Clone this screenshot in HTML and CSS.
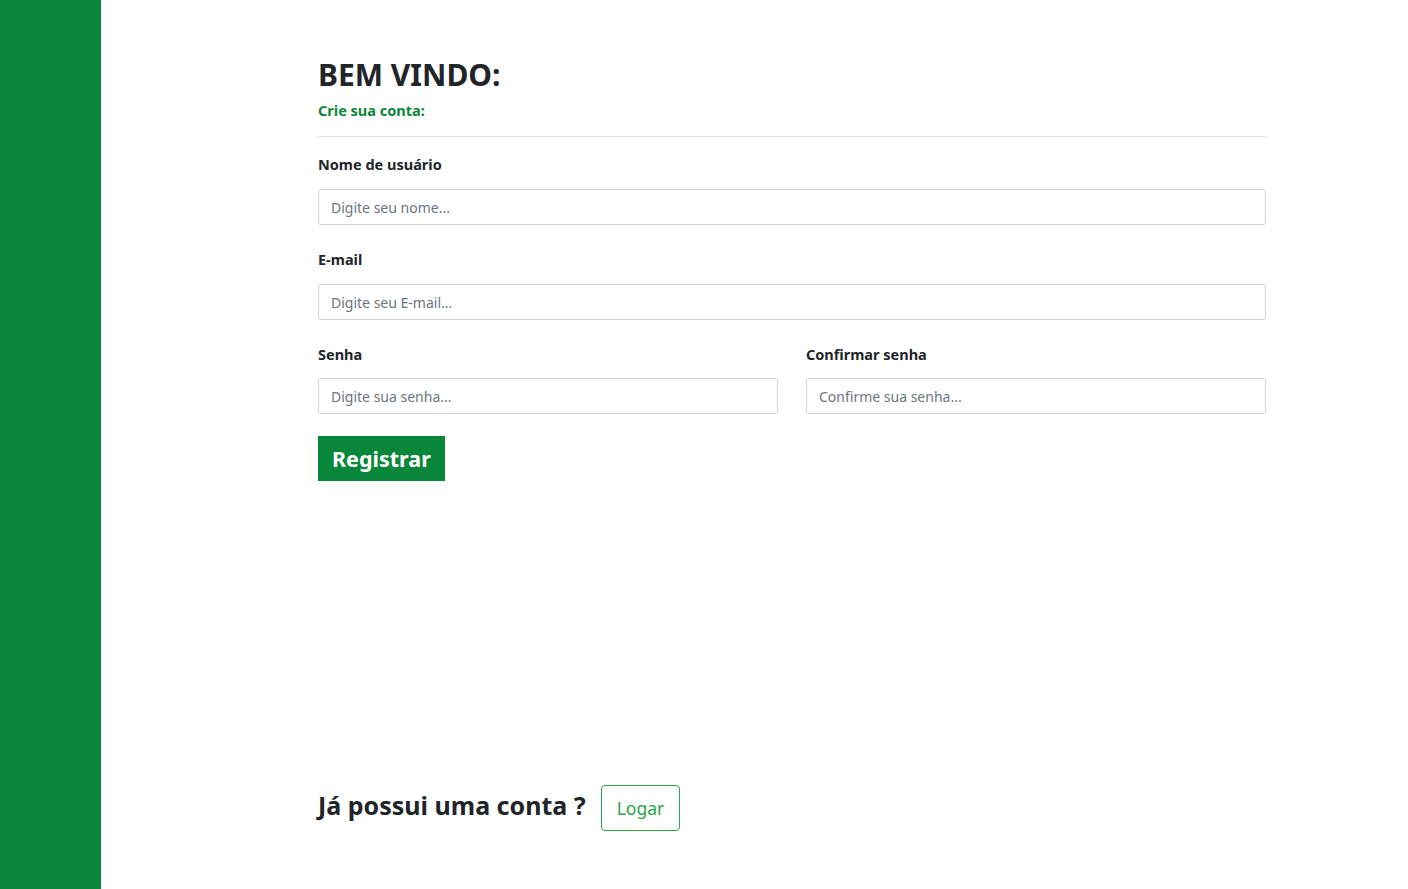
FILE: index.html
```html
<!DOCTYPE html>
<html lang="pt-BR">
<head>
<meta charset="utf-8">
<title>Registro</title>
<link rel="stylesheet" href="styles.css">
</head>
<body>
<div class="page">
  <aside class="sidebar"></aside>
  <main class="main">
    <div class="container">
      <h2 class="title">BEM VINDO:</h2>
      <p class="subtitle">Crie sua conta:</p>
      <hr class="divider">
      <form class="form">
        <div class="field">
          <label class="label">Nome de usuário</label>
          <input class="input" type="text" placeholder="Digite seu nome...">
        </div>
        <div class="field">
          <label class="label">E-mail</label>
          <input class="input" type="email" placeholder="Digite seu E-mail...">
        </div>
        <div class="row">
          <div class="field">
            <label class="label">Senha</label>
            <input class="input" type="password" placeholder="Digite sua senha...">
          </div>
          <div class="field">
            <label class="label">Confirmar senha</label>
            <input class="input" type="password" placeholder="Confirme sua senha...">
          </div>
        </div>
        <button class="btn-register" type="button">Registrar</button>
      </form>
      <div class="login-row">
        <h3 class="login-text">Já possui uma conta ?</h3>
        <button class="btn-login" type="button">Logar</button>
      </div>
    </div>
  </main>
</div>
</body>
</html>
```
FILE: styles.css
```css
* { box-sizing: border-box; }
html, body { margin: 0; padding: 0; }
body {
  font-family: "Noto Sans", "Open Sans", sans-serif;
  color: #212529;
  background: #fff;
}
.page { display: flex; min-height: 889px; }
.sidebar { width: 101px; flex: 0 0 101px; background: #08873a; }
.main { flex: 1; padding: 56px 0 0 217px; }
.container { width: 948px; display: flex; flex-direction: column; min-height: 775px; }
.title { font-size: 30px; font-weight: 700; line-height: 38px; margin: 0 0 6px; }
.subtitle { font-size: 14.5px; font-weight: 700; color: #08873a; margin: 0; line-height: 20px; }
.divider { border: 0; border-top: 1px solid #dee2e6; margin: 16px 0 16px; }
.form { display: flex; flex-direction: column; }
.field { display: flex; flex-direction: column; flex: 1; margin-bottom: 23px; }
.row .field { margin-bottom: 22px; }
.label { font-size: 14.5px; font-weight: 700; line-height: 22px; margin-bottom: 14px; }
.row .label { margin-bottom: 13px; }
.input {
  height: 36px; width: 100%;
  border: 1px solid #ced4da; border-radius: 3px;
  padding: 0 12px; font-family: inherit; font-size: 14px; color: #495057;
}
.input::placeholder { color: #6c757d; }
.row { display: flex; gap: 28px; }
.btn-register {
  align-self: flex-start;
  background: #08873a; color: #fff; border: 0; border-radius: 0;
  font-family: inherit; font-size: 21.5px; font-weight: 700;
  height: 45px; padding: 0 14px;
}
.login-row { margin-top: auto; display: flex; align-items: center; gap: 15px; }
.login-text { font-size: 25px; font-weight: 700; margin: 0 0 6px; line-height: 30px; }
.btn-login {
  background: #fff; color: #28a745; border: 1px solid #28a745; border-radius: 4px;
  font-family: inherit; font-size: 17.5px; height: 46px; padding: 0 15px;
}
```
